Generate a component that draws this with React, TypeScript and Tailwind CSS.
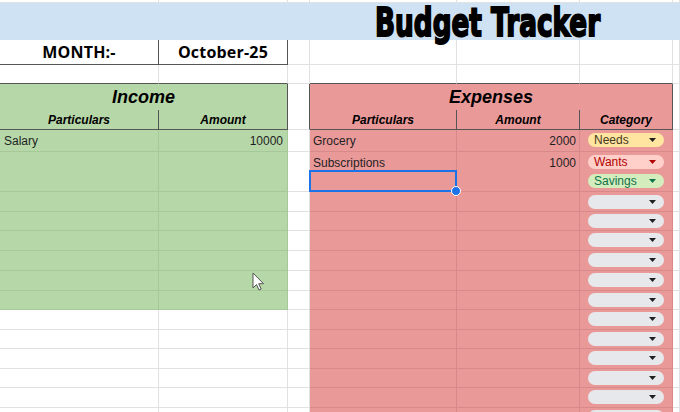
import type { ReactNode } from "react";

type Cat = "Needs" | "Wants" | "Savings" | null;

const chipTone = {
  Needs: { chip: "bg-[#ffe5a0] text-[#473821]", arrow: "#1f1f1f" },
  Wants: { chip: "bg-[#ffcfc9] text-[#b10202]", arrow: "#b10202" },
  Savings: { chip: "bg-[#d4edbc] text-[#11734b]", arrow: "#11734b" },
  none: { chip: "bg-[#e7e8ec] text-[#1f1f1f]", arrow: "#1f1f1f" },
};

function Chip(props: { cat: Cat }) {
  const tone = chipTone[props.cat ?? "none"];
  return (
    <div
      className={`flex h-[14px] w-[76px] items-center justify-between rounded-full pl-[6px] pr-[8px] text-[12px] leading-none ${tone.chip}`}
    >
      <span>{props.cat ?? ""}</span>
      <svg width="7" height="4" viewBox="0 0 7 4">
        <path d="M0 0h7L3.5 4z" fill={tone.arrow} />
      </svg>
    </div>
  );
}

function Cell(props: { className?: string; children?: ReactNode }) {
  return (
    <div className={`relative flex items-center whitespace-nowrap border-r border-b ${props.className ?? ""}`}>
      {props.children}
    </div>
  );
}

const light = "border-r-[#e1e1e1] border-b-[#e1e1e1] bg-white";
const green = "border-r-[#a7c899] border-b-[#a7c899] bg-[#b6d7a8]";
const red = "border-r-[#d88a8a] border-b-[#d88a8a] bg-[#ea9999]";

// row heights copied off the sheet, they're not all equal
const rowHeights = [
  "h-[21.5px]", "h-[19.5px]", "h-[21px]", "h-[20px]", "h-[19px]", "h-[19.5px]", "h-[20px]", "h-[20.5px]", "h-[19px]",
  "h-[19.5px]", "h-[19.5px]", "h-[19.5px]", "h-[19.5px]", "h-[19.5px]", "h-[19.5px]",
];

const income = [["Salary", "10000"]];
const expenses: { name: string; amount: string; cat: Cat }[] = [
  { name: "Grocery", amount: "2000", cat: "Needs" },
  { name: "Subscriptions", amount: "1000", cat: "Wants" },
  { name: "", amount: "", cat: "Savings" },
];

export default function App() {
  return (
    <div className="relative h-[412px] w-[680px] overflow-hidden bg-white font-['Liberation_Sans',Arial,sans-serif] text-[12px] text-[#1f1f1f]">
      {/* top sliver of the previous row */}
      <div className="grid h-[3px] grid-cols-[159px_129px_22px_147px_123px_93px_7px]">
        {Array.from({ length: 7 }, (_, i) => (
          <Cell key={i} className={light} />
        ))}
      </div>

      {/* title band */}
      <div className="grid h-[37px] grid-cols-[159px_129px_22px_147px_123px_93px_7px]">
        <div className="col-span-2 border-b border-b-[#555] bg-[#cfe2f3]" />
        <div className="col-span-5 flex items-start whitespace-nowrap border-b border-b-[#c9c9c9] bg-[#cfe2f3] pl-[87px]">
          <span className="relative z-10 inline-block origin-left scale-x-[0.675] font-['DejaVu_Sans',sans-serif] text-[39px] font-bold leading-none text-black [-webkit-text-stroke:2px_black]">
            Budget Tracker
          </span>
        </div>
      </div>

      {/* month */}
      <div className="grid h-[25px] grid-cols-[159px_129px_22px_147px_123px_93px_7px] font-['Open_Sans',sans-serif] text-[16px] font-bold tracking-[0.2px] text-black">
        <Cell className="justify-center border-r-[#555] border-b-[#555] bg-white">MONTH:-</Cell>
        <Cell className="justify-center border-r-[#555] border-b-[#555] bg-white">October-25</Cell>
        <Cell className={light} />
        <Cell className={light} />
        <Cell className={light} />
        <Cell className={light} />
        <Cell className={light} />
      </div>

      {/* spacer row */}
      <div className="grid h-[19px] grid-cols-[159px_129px_22px_147px_123px_93px_7px]">
        <Cell className="border-r-[#e1e1e1] border-b-[#555] bg-white" />
        <Cell className="border-r-[#e1e1e1] border-b-[#555] bg-white" />
        <Cell className={light} />
        <Cell className="border-r-[#e1e1e1] border-b-[#555] bg-white" />
        <Cell className="border-r-[#e1e1e1] border-b-[#555] bg-white" />
        <Cell className="border-r-[#e1e1e1] border-b-[#555] bg-white" />
        <Cell className={light} />
      </div>

      {/* table titles */}
      <div className="grid h-[26px] grid-cols-[159px_129px_22px_147px_123px_93px_7px] text-[18px] font-bold italic text-black">
        <Cell className="col-span-2 justify-center border-r-[#555] border-b-[#555] bg-[#b6d7a8]">Income</Cell>
        <Cell className="border-r-[#555] border-b-[#e1e1e1] bg-white" />
        <Cell className="col-span-3 justify-center border-r-[#555] border-b-[#555] bg-[#ea9999]">Expenses</Cell>
        <Cell className={light} />
      </div>

      {/* column headers */}
      <div className="grid h-[20px] grid-cols-[159px_129px_22px_147px_123px_93px_7px] font-bold italic text-black">
        <Cell className="justify-center border-r-[#555] border-b-[#555] bg-[#b6d7a8]">Particulars</Cell>
        <Cell className="justify-center border-r-[#555] border-b-[#555] bg-[#b6d7a8]">Amount</Cell>
        <Cell className="border-r-[#555] border-b-[#e1e1e1] bg-white" />
        <Cell className="justify-center border-r-[#555] border-b-[#555] bg-[#ea9999]">Particulars</Cell>
        <Cell className="justify-center border-r-[#555] border-b-[#555] bg-[#ea9999]">Amount</Cell>
        <Cell className="justify-center border-r-[#555] border-b-[#555] bg-[#ea9999]">Category</Cell>
        <Cell className={light} />
      </div>

      {/* data rows */}
      {rowHeights.map((h, i) => {
        const inc = income[i];
        const exp = expenses[i];
        const left = i < 9 ? green : light;
        return (
          <div key={i} className={`grid grid-cols-[159px_129px_22px_147px_123px_93px_7px] ${h}`}>
            <Cell className={`pl-[4px] pt-[2px] ${left}`}>{inc?.[0]}</Cell>
            <Cell className={`justify-end pr-[4px] pt-[2px] ${left}`}>{inc?.[1]}</Cell>
            <Cell className={light} />
            <Cell className={`pl-[3px] pt-[2px] ${red}`}>
              {exp?.name}
              {i === 2 && (
                <div className="absolute -top-px -left-px -right-px -bottom-px z-10 border-2 border-[#1a73e8]">
                  <div className="absolute -right-[6px] -bottom-[6px] h-[10px] w-[10px] rounded-full border-[1.5px] border-white bg-[#1a73e8]" />
                </div>
              )}
            </Cell>
            <Cell className={`justify-end pr-[3px] pt-[2px] ${red}`}>{exp?.amount}</Cell>
            <Cell className={`pl-[8px] ${red}`}>
              <Chip cat={exp?.cat ?? null} />
            </Cell>
            <Cell className={light} />
          </div>
        );
      })}

      {/* mouse pointer */}
      <svg className="absolute left-[252px] top-[272px] z-10" width="14" height="20" viewBox="0 0 14 20">
        <path d="M1 1v15l3.5-3.5 2.5 5.5 2.2-1-2.5-5.3h4.8z" fill="#fff" stroke="#555" strokeWidth="1" strokeLinejoin="round" />
      </svg>
    </div>
  );
}
